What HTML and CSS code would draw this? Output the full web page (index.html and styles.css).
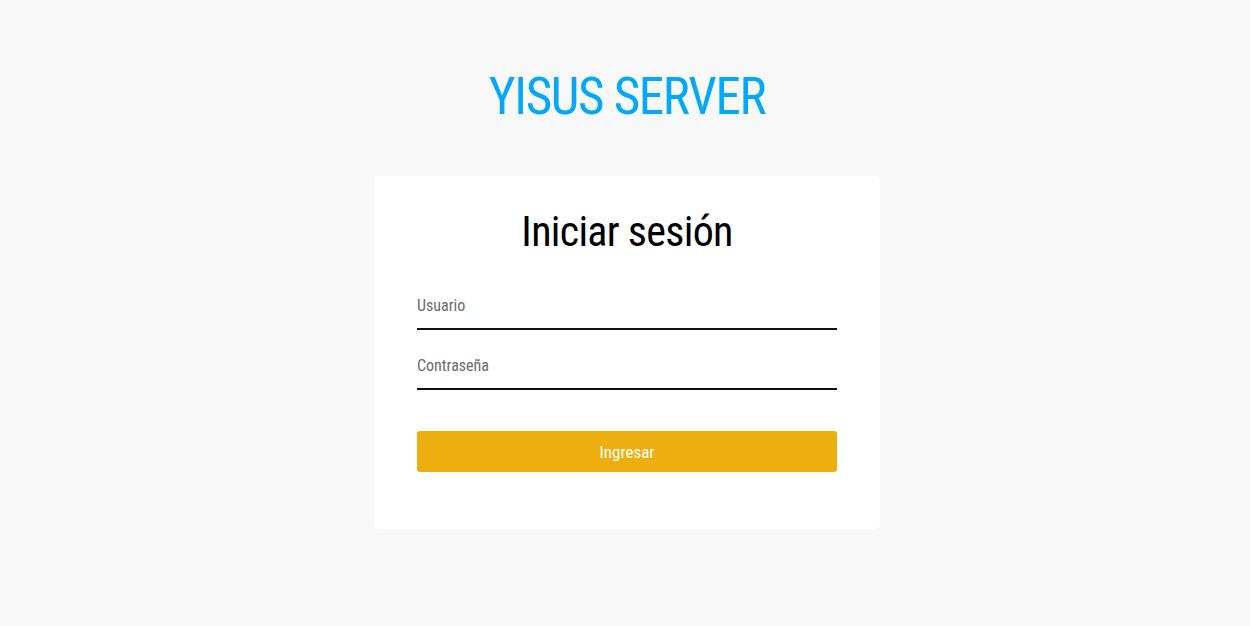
FILE: index.html
```html
<!DOCTYPE html>
<html lang="es">
<head>
<meta charset="utf-8">
<title>Yisus Server</title>
<link rel="stylesheet" href="styles.css">
</head>
<body>
<main class="page">
  <h1 class="brand">YISUS SERVER</h1>
  <form class="card">
    <h2 class="card-title">Iniciar sesión</h2>
    <input class="field" type="text" placeholder="Usuario">
    <input class="field" type="password" placeholder="Contraseña">
    <button class="submit" type="button">Ingresar</button>
  </form>
</main>
</body>
</html>
```
FILE: styles.css
```css
* { box-sizing: border-box; }
html, body { margin: 0; padding: 0; }
body {
  background: #f8f8f8;
  font-family: "Roboto Condensed", "Liberation Sans Narrow", "Liberation Sans", sans-serif;
  height: 626px;
}
.page {
  display: flex;
  flex-direction: column;
  align-items: center;
  padding-top: 66px;
  padding-left: 4px;
}
.brand {
  margin: 0;
  font-weight: 400;
  font-size: 51px;
  line-height: 62px;
  color: #03a9f4;
  letter-spacing: -1.3px;
}
.card {
  margin-top: 48px;
  width: 506px;
  background: #fff;
  border-radius: 5px;
  padding: 30px 43px 57px;
  display: flex;
  flex-direction: column;
}
.card-title {
  margin: 0 0 30px;
  text-align: center;
  font-weight: 400;
  font-size: 42px;
  line-height: 52px;
  color: #000;
  letter-spacing: -0.7px;
}
.field {
  border: none;
  border-bottom: 2px solid #111;
  outline: none;
  background: transparent;
  font-family: inherit;
  font-size: 16px;
  height: 42px;
  padding: 0 0 5px;
  margin-bottom: 18px;
  color: #333;
}
.field::placeholder { color: #6b6b6b; }
.submit {
  margin-top: 23px;
  height: 41px;
  border: none;
  border-radius: 3px;
  background: #ecaf0f;
  color: #fff;
  font-family: inherit;
  font-size: 17px;
}
```
